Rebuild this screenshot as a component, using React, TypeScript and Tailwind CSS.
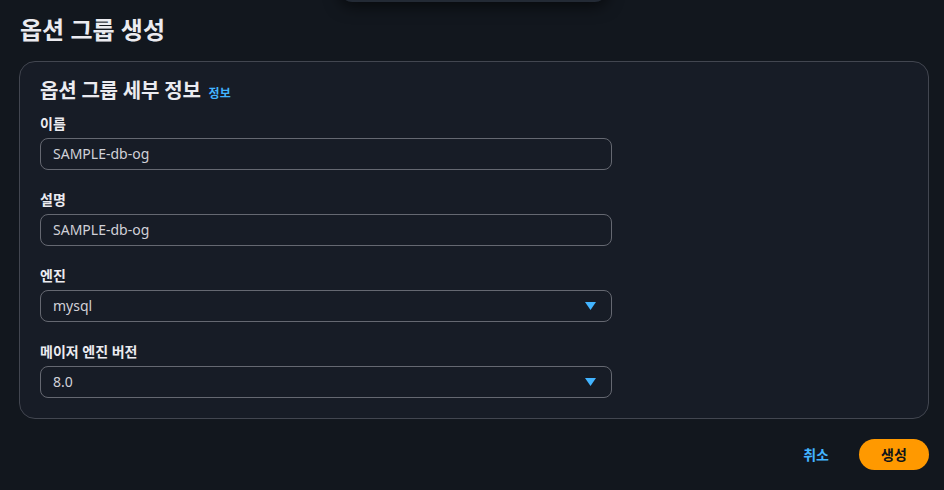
import React from "react";

const font = { fontFamily: '"Noto Sans", "Noto Sans CJK KR", sans-serif' };

const TextField: React.FC<{ label: string; value: string }> = ({ label, value }) => (
  <div className="flex flex-col gap-1">
    <label className="text-sm font-bold leading-5 text-[#ebebf0]">{label}</label>
    <div className="w-[572px] h-8 px-3 flex items-center rounded-lg border border-[#656871] text-sm text-[#d1d1d8]">
      {value}
    </div>
  </div>
);

const SelectField: React.FC<{ label: string; value: string }> = ({ label, value }) => (
  <div className="flex flex-col gap-1">
    <label className="text-sm font-bold leading-5 text-[#ebebf0]">{label}</label>
    <div className="w-[572px] h-8 pl-3 pr-[15px] flex items-center justify-between rounded-lg border border-[#656871] text-sm text-[#d1d1d8]">
      <span>{value}</span>
      <svg width="11" height="8" viewBox="0 0 11 8">
        <path d="M0 0 L11 0 L5.5 8 Z" fill="#42b4ff" />
      </svg>
    </div>
  </div>
);

const App: React.FC = () => {
  return (
    <div className="relative w-[944px] h-[490px] overflow-hidden bg-[#12171e]" style={font}>
      {/* bottom edge of an overlay above the view */}
      <div className="absolute left-[340px] -top-[40px] w-[267px] h-[42px] rounded-b-xl bg-[#232a35] shadow-[0_4px_16px_rgba(0,0,0,0.6)]" />

      <div className="pl-[19px] pr-[15px] pt-[12px]">
        <h1 className="pl-px text-2xl font-bold leading-9 text-[#ebebf0]">옵션 그룹 생성</h1>

        <div className="mt-[13px] rounded-2xl border border-[#424650] bg-[#171c26] px-5 pt-[17px] pb-[20px]">
          <div className="flex items-baseline gap-2">
            <h2 className="text-xl font-bold leading-6 tracking-[-0.2px] text-[#ebebf0]">옵션 그룹 세부 정보</h2>
            <span className="text-xs font-bold text-[#42b4ff]">정보</span>
          </div>

          <div className="mt-[11px] flex flex-col gap-5">
            <TextField label="이름" value="SAMPLE-db-og" />
            <TextField label="설명" value="SAMPLE-db-og" />
            <SelectField label="엔진" value="mysql" />
            <SelectField label="메이저 엔진 버전" value="8.0" />
          </div>
        </div>

        <div className="mt-[20px] flex items-center justify-end gap-[30px]">
          <button className="text-sm font-bold text-[#42b4ff]">취소</button>
          <button className="h-[31px] w-[70px] rounded-full bg-[#ff9900] text-sm font-bold text-[#0f141a]">
            생성
          </button>
        </div>
      </div>
    </div>
  );
};

export default App;
